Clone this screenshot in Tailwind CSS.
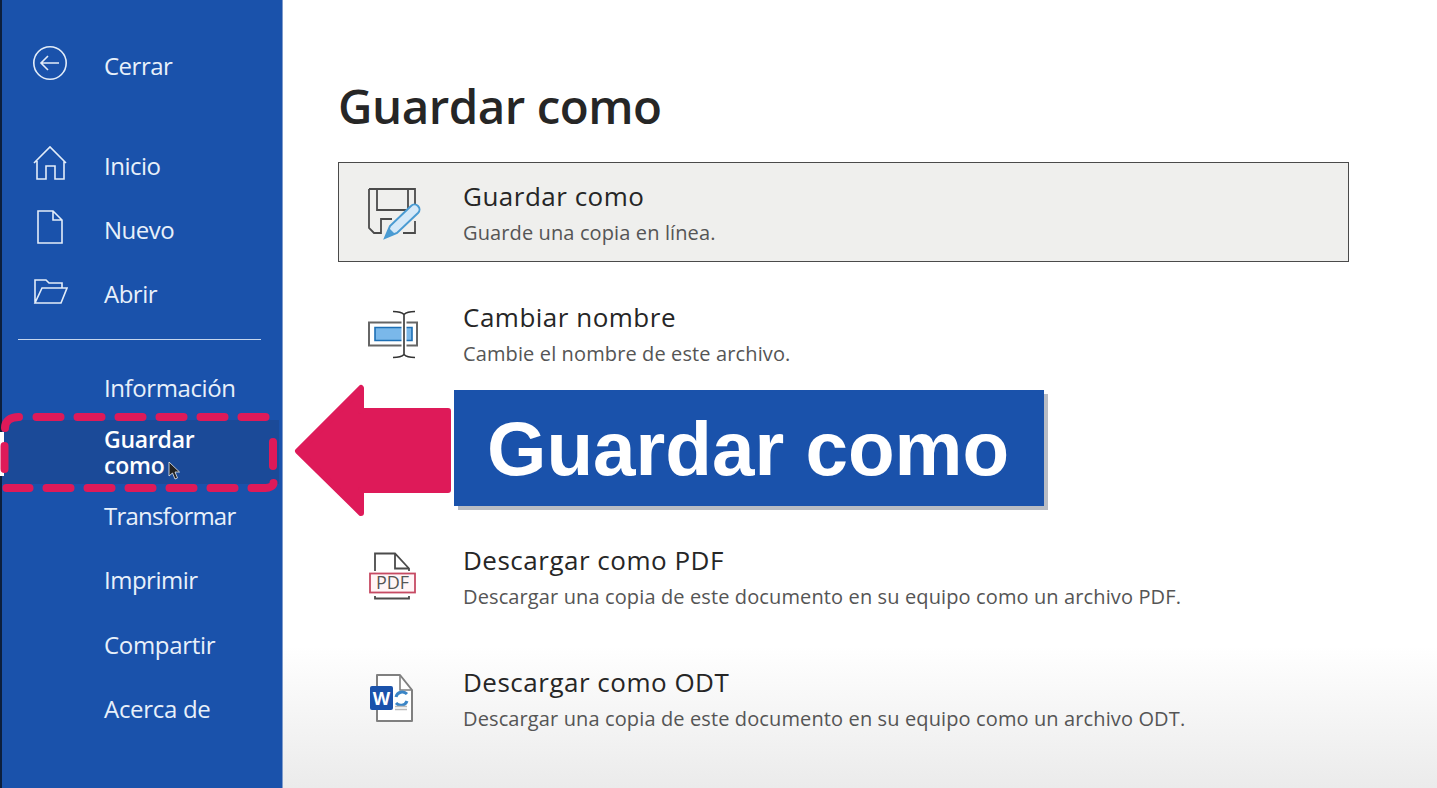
<!doctype html>
<html lang="es"><head><meta charset="utf-8"><script src="https://cdn.jsdelivr.net/npm/@tailwindcss/browser@4"></script></head>
<body class="m-0">
<div class="relative flex w-[1437px] h-[788px] overflow-hidden bg-white font-['Open_Sans',sans-serif] text-[#262626]">
  <!-- sidebar -->
  <aside class="w-[283px] h-full shrink-0 bg-[#1a52ab] border-l-2 border-l-[#0c1f3d] border-r border-r-[#7f9ccc] text-[#e8f0fa] text-[24px] flex flex-col">
    <div class="h-[34px]"></div>
    <a class="flex items-center h-[64px] pl-[30px] gap-[36px]">
      <svg class="w-[36px] h-[36px] mb-[6px]" viewBox="0 0 36 36" fill="none" stroke="#e3edf9" stroke-width="1.6"><circle cx="18" cy="18" r="16.2"/><path d="M27 18H9M16 11l-7 7 7 7"/></svg>
      <span class="tracking-[-0.5px]">Cerrar</span>
    </a>
    <div class="h-[36px]"></div>
    <a class="flex items-center h-[64px] pl-[30px] gap-[36px]">
      <svg class="w-[36px] h-[36px] mb-[6px]" viewBox="0 0 36 36" fill="none" stroke="#e3edf9" stroke-width="1.6"><path d="M2 18 18 2l16 16M5 16v18h9V21h9v13h9V16"/></svg>
      <span class="tracking-[-0.5px]">Inicio</span>
    </a>
    <a class="flex items-center h-[64px] pl-[30px] gap-[36px]">
      <svg class="w-[36px] h-[36px] mb-[6px]" viewBox="0 0 36 36" fill="none" stroke="#e3edf9" stroke-width="1.6"><path d="M6 2h15l9 9v23H6zM21 2v9h9"/></svg>
      <span class="tracking-[-0.5px]">Nuevo</span>
    </a>
    <a class="flex items-center h-[64px] pl-[30px] gap-[36px]">
      <svg class="w-[36px] h-[36px] mb-[6px]" viewBox="0 0 36 36" fill="none" stroke="#e3edf9" stroke-width="1.6"><path d="M3 30V7h11l3 3h13v5M3 30h26l6-15H10z"/></svg>
      <span class="tracking-[-0.5px]">Abrir</span>
    </a>
    <div class="h-[13px]"></div>
    <div class="mx-[16px] h-px w-[243px] bg-[#c6d6ee]"></div>
    <div class="h-[16px]"></div>
    <a class="flex items-center h-[64px] pl-[102px] tracking-[-0.4px]">Información</a>
    <a class="flex items-center h-[64px] pl-[102px] bg-[#1b4a98] mr-[3px] text-white font-semibold text-[23px] leading-[26px] tracking-[-0.25px]">Guardar<br>como</a>
    <a class="flex items-center h-[64px] pl-[102px] tracking-[-0.8px]">Transformar</a>
    <a class="flex items-center h-[64px] pl-[102px] tracking-[-0.5px]">Imprimir</a>
    <a class="flex items-center h-[65px] pl-[102px] tracking-[-0.3px]">Compartir</a>
    <a class="flex items-center h-[64px] pl-[102px] tracking-[-0.3px]">Acerca de</a>
  </aside>

  <!-- main -->
  <main class="flex-1 h-full bg-gradient-to-b from-white from-[82%] to-[#ebebeb] pl-[55px] pr-[88px]">
    <h1 class="h-[162px] pt-[73px] text-[47.5px] leading-[66px] font-semibold tracking-[-0.5px] text-[#262626]">Guardar como</h1>
    <div class="flex flex-col gap-[21.5px]">
      <div class="flex items-center h-[100px] bg-[#efefed] border border-[#4a4a4a] pl-[28px] gap-[44px]">
        <svg class="w-[52px] h-[52px] shrink-0 overflow-visible" viewBox="0 0 52 52" fill="none"><path d="M2 3h46v18M2 3v39l5 5h7V33h11M10 3v21h31V3M48 35v12H36" stroke="#4b4b4b" stroke-width="1.8"/><path d="M18 52l5-12L44 20c2-2 5-2 7 0s2 5 0 7L30 47z" fill="#d6e9f8" stroke="#4a9bd2" stroke-width="2"/><path d="M18 52l4-10 6 6z" fill="#4a9bd2"/></svg>
        <div class="tracking-[0.5px] pt-[4px]"><div class="text-[26px] leading-[35px]">Guardar como</div><div class="mt-[1px] text-[20px] leading-[35px] tracking-[0.12px] text-[#555]">Guarde una copia en línea.</div></div>
      </div>
      <div class="flex items-center h-[100px] pl-[29px] gap-[44px]">
        <svg class="w-[52px] h-[52px] shrink-0 overflow-visible" viewBox="0 0 52 52" fill="none"><path d="M2 14.500h48v23H2z" stroke="#666" stroke-width="2"/><path d="M8 19.500h37v13H8z" fill="#7ab8ea" stroke="#1d6fb5" stroke-width="1.6"/><path d="M37 4v45" stroke="#fff" stroke-width="5"/><path d="M26 3.500c5 0 9 1 11 3v40c-2 2-6 3-11 3M48 3.500c-5 0-9 1-11 3M48 49.500c-5 0-9-1-11-3" stroke="#333" stroke-width="1.6"/></svg>
        <div class="tracking-[0.5px] pt-[4px]"><div class="text-[26px] leading-[35px]">Cambiar nombre</div><div class="mt-[1px] text-[20px] leading-[35px] tracking-[0.12px] text-[#555]">Cambie el nombre de este archivo.</div></div>
      </div>
      <div class="h-[100px]"></div>
      <div class="flex items-center h-[100px] pl-[29px] gap-[44px]">
        <svg class="w-[52px] h-[52px] shrink-0 overflow-visible" viewBox="0 0 52 52" fill="none"><path d="M8 20V2.500h20l14 15V20M28 2.500v15h14M8 45v2.500h34V45" stroke="#4b4b4b" stroke-width="1.8"/><rect x="3" y="22.500" width="45" height="19" fill="#fff5f7" stroke="#c64a63" stroke-width="1.8"/><text x="25.500" y="38" text-anchor="middle" font-family="Open Sans" font-size="18" fill="#555">PDF</text></svg>
        <div class="tracking-[0.5px] pt-[4px]"><div class="text-[26px] leading-[35px]">Descargar como PDF</div><div class="mt-[1px] text-[20px] leading-[35px] tracking-[0.12px] text-[#555]">Descargar una copia de este documento en su equipo como un archivo PDF.</div></div>
      </div>
      <div class="flex items-center h-[100px] pl-[29px] gap-[44px]">
        <svg class="w-[52px] h-[52px] shrink-0 overflow-visible" viewBox="0 0 52 52" fill="none"><path d="M10 3h23l12 15v31H10z" fill="#fff" stroke="#808080" stroke-width="2" stroke-linejoin="round"/><path d="M33 3v15h12" stroke="#808080" stroke-width="1.6"/><path d="M29 25a6.500 6.500 0 0 1 11-3M40 29a6.500 6.500 0 0 1-11 2" stroke="#3a85c6" stroke-width="3"/><path d="M28 34.500h12M28 37.500h12" stroke="#bbb" stroke-width="1.4"/><rect x="3" y="14" width="23" height="24" rx="2" fill="#1a52ab"/><text x="14.500" y="32.500" text-anchor="middle" font-family="Open Sans" font-weight="700" font-size="18" fill="#fff">W</text></svg>
        <div class="tracking-[0.5px] pt-[4px]"><div class="text-[26px] leading-[35px]">Descargar como ODT</div><div class="mt-[1px] text-[20px] leading-[35px] tracking-[0.12px] text-[#555]">Descargar una copia de este documento en su equipo como un archivo ODT.</div></div>
      </div>
    </div>
  </main>

  <!-- overlays -->
  <div class="absolute left-0 top-[432px] w-[4px] h-[44px] bg-white"></div>
  <svg class="absolute left-0 top-[400px] w-[290px] h-[100px]" viewBox="0 400 290 100" fill="none" stroke="#de1a59" stroke-width="8" stroke-linecap="round">
    <path d="M5 428c0-7 5-11 14-11M36.500 417h24M77.500 417h24M118.500 417h24M159.500 417h24M200.500 417h24M241.500 417h24M273 442v24M4.500 446v23"/>
    <path d="M6.500 488h23M46.500 488h24M87.500 488h24M128.500 488h24M169.500 488h24M210.500 488h24M251.500 488h14c4 0 8-2 8-5"/>
  </svg>
  <svg class="absolute left-[168px] top-[461px] w-[12px] h-[19px]" viewBox="0 0 12 19"><path d="M1 1v14l3.500-3 2.500 6 2.500-1-2.500-6h4.500z" fill="#222" stroke="#eee" stroke-width=".8"/></svg>
  <svg class="absolute left-[294px] top-[384px] w-[158px] h-[134px]" viewBox="0 0 158 134"><path d="M4 67 67 4v23h87v79H67v23z" fill="#de1a59" stroke="#de1a59" stroke-width="6" stroke-linejoin="round"/></svg>
  <div class="absolute left-[454px] top-[390px] w-[590px] h-[116px] bg-[#1a52ab] shadow-[4px_4px_0_#b8bcc4] flex items-center pl-[33px] pt-[3px] font-['Liberation_Sans',sans-serif] font-bold text-white text-[76.4px] leading-none">Guardar como</div>
</div>
</body></html>
